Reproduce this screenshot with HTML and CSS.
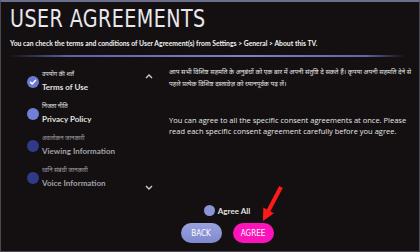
FILE: index.html
```html
<!DOCTYPE html>
<html>
<head>
<meta charset="utf-8">
<link rel="stylesheet" href="styles.css">
</head>
<body>
<div class="screen">
  <header class="head">
    <h1 class="title">USER AGREEMENTS</h1>
    <p class="sub">You can check the terms and conditions of User Agreement(s) from Settings &gt; General &gt; About this TV.</p>
  </header>
  <div class="sep"></div>
  <main class="body">
    <div class="listwrap">
      <ul class="list">
        <li class="item on">
          <span class="dot checked"><svg viewBox="0 0 12 12" width="12" height="12"><path d="M3.4 6.2 L5.2 7.9 L8.6 4.3" fill="none" stroke="#fff" stroke-width="1.5" stroke-linecap="round" stroke-linejoin="round"/></svg></span>
          <div class="labels"><span class="hi">उपयोग की शर्तें</span><span class="en">Terms of Use</span></div>
        </li>
        <li class="item on">
          <span class="dot light"></span>
          <div class="labels"><span class="hi">निजता नीति</span><span class="en">Privacy Policy</span></div>
        </li>
        <li class="item dim">
          <span class="dot dark"></span>
          <div class="labels"><span class="hi">अवलोकन जानकारी</span><span class="en">Viewing Information</span></div>
        </li>
        <li class="item dim">
          <span class="dot dark"></span>
          <div class="labels"><span class="hi">ध्वनि संबंधी जानकारी</span><span class="en">Voice Information</span></div>
        </li>
      </ul>
      <div class="scroll">
        <svg viewBox="0 0 8 5" width="8" height="5"><path d="M1 4 L4 1 L7 4" fill="none" stroke="#ccc" stroke-width="1.4"/></svg>
        <svg viewBox="0 0 8 5" width="8" height="5"><path d="M1 1 L4 4 L7 1" fill="none" stroke="#ccc" stroke-width="1.4"/></svg>
      </div>
    </div>
    <div class="text">
      <p class="hipara">आप सभी विशिष्ट सहमति के अनुबंधों को एक बार में अपनी संतुष्टि दे सकते हैं। कृपया अपनी सहमति देने से पहले प्रत्येक विशिष्ट दस्तावेज़ को ध्यानपूर्वक पढ़ लें।</p>
      <p class="enpara">You can agree to all the specific consent agreements at once. Please read each specific consent agreement carefully before you agree.</p>
    </div>
  </main>
  <footer class="foot">
    <div class="agreeall"><span class="dot light small"></span><span>Agree All</span></div>
    <div class="btns">
      <span class="btn back">BACK</span>
      <span class="btn agree">AGREE</span>
    </div>
  </footer>
  <svg class="arrow" viewBox="0 0 30 42" width="30" height="42"><path d="M23.2 4.1 L26.8 5.9 L14.4 29.3 L17.9 31.2 L7 39 L7.3 25.6 L10.8 27.5 Z" fill="#ff1a1a"/></svg>
</div>
</body>
</html>
```

FILE: styles.css
```css
* { box-sizing: border-box; margin: 0; padding: 0; }
html, body { width: 420px; height: 252px; overflow: hidden; }
body { background: #141011; font-family: Lato, "Noto Sans", "Noto Sans Devanagari", sans-serif; color: #e6e6e6; }
.screen { position: relative; width: 420px; height: 252px; border: 1px solid #4a4850; border-top: 2px solid #6b6f8c; display: flex; flex-direction: column; }
.head { padding: 1px 0 0 9px; }
.title { font-family: "DejaVu Sans Condensed", "DejaVu Sans", sans-serif; font-weight: normal; font-size: 25px; line-height: 32px; letter-spacing: 0.5px; color: #e8e8ec; transform: scaleX(0.85); transform-origin: left; white-space: nowrap; }
.sub { font-weight: bold; font-size: 6.8px; line-height: 10px; color: #f0f0f0; margin-top: 3px; white-space: nowrap; }
.sep { height: 2px; margin: 7px 14px 0 8px; background: linear-gradient(90deg, rgba(90,95,170,0) 0%, #5c62a8 15%, #7c82c4 60%, #6065a8 90%, rgba(90,95,170,0) 100%); }
.body { display: flex; align-items: flex-start; }
.listwrap { width: 160px; display: flex; padding: 12px 0 0 26px; }
.list { list-style: none; display: flex; flex-direction: column; gap: 7px; width: 118px; }
.item { display: flex; align-items: center; gap: 3px; }
.dot { width: 12px; height: 12px; border-radius: 50%; flex: none; display: flex; align-items: center; justify-content: center; }
.dot.checked { background: #6a78cf; }
.dot.light { background: #7180d6; }
.dot.dark { background: #313a86; }
.labels { display: flex; flex-direction: column; }
.hi { font-family: "Noto Sans Devanagari", "Noto Sans", sans-serif; font-size: 6px; line-height: 12px; }
.en { font-weight: bold; font-size: 8px; line-height: 13px; }
.item.on .labels { color: #e0e0e0; }
.item.dim .labels { color: #a0a0a8; }
.scroll { display: flex; flex-direction: column; justify-content: space-between; padding: 5px 0 0; height: 121px; }
.text { padding: 10px 0 0 8px; width: 252px; }
.hipara { font-family: "Noto Sans Devanagari", "Noto Sans", sans-serif; font-size: 6.5px; line-height: 12px; color: #e6e6e6; }
.enpara { font-family: "Open Sans", Lato, sans-serif; font-size: 7.5px; line-height: 10.5px; color: #e6e6e6; margin-top: 24px; }
.foot { margin-top: auto; padding-bottom: 8px; padding-left: 34px; display: flex; flex-direction: column; align-items: center; gap: 7px; }
.agreeall { display: flex; align-items: center; gap: 3px; font-weight: bold; font-size: 8px; color: #e0e0e0; }
.dot.small { width: 11px; height: 11px; background: #8a95d8; }
.btns { display: flex; gap: 11px; }
.btn { width: 41px; height: 20px; border-radius: 10px; display: flex; align-items: center; justify-content: center; font-family: "DejaVu Sans Condensed", sans-serif; font-size: 8px; color: #fff; }
.btn.back { background: linear-gradient(#9aa3e0, #7f89cc); }
.btn.agree { background: #fb14b9; }
.arrow { position: absolute; left: 255px; top: 180px; }
```
